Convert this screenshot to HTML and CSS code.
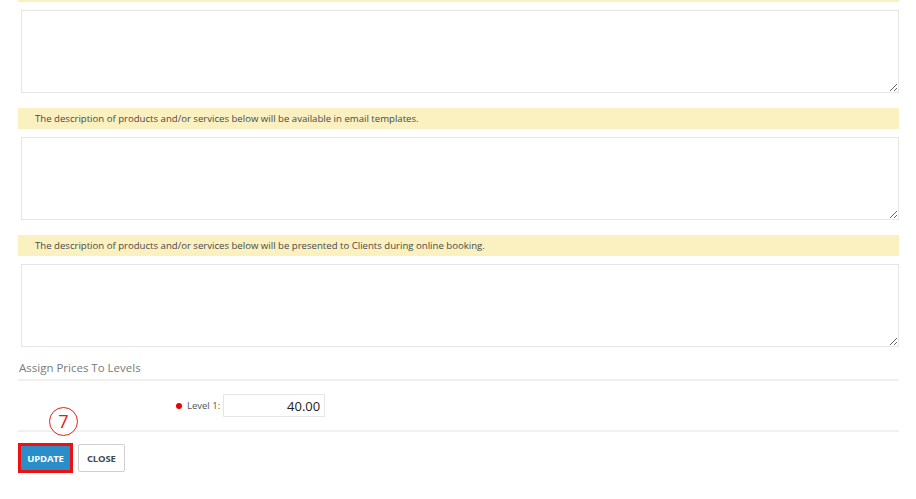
FILE: index.html
```html
<!DOCTYPE html>
<html lang="en">
<head>
    <meta charset="UTF-8">
    <meta name="viewport" content="width=device-width, initial-scale=1.0">
    <title>Edit Service</title>
    <link rel="stylesheet" href="styles.css">
</head>
<body>
    <div class="form">
        <div class="field">
            <div class="note cut"></div>
            <textarea class="desc"></textarea>
        </div>

        <div class="field">
            <div class="note">The description of products and/or services below will be available in email templates.</div>
            <textarea class="desc"></textarea>
        </div>

        <div class="field">
            <div class="note">The description of products and/or services below will be presented to Clients during online booking.</div>
            <textarea class="desc"></textarea>
        </div>

        <!-- Prices -->
        <div class="section-title">Assign Prices To Levels</div>
        <div class="levels">
            <span class="required"></span>
            <label for="level1">Level 1:</label>
            <input id="level1" class="price" type="text" value="40.00">
        </div>

        <div class="actions">
            <span class="step">7</span>
            <button class="btn btn-primary">UPDATE</button>
            <button class="btn">CLOSE</button>
        </div>
    </div>
</body>
</html>
```

FILE: styles.css
```css
* {
    margin: 0;
    padding: 0;
    box-sizing: border-box;
}

body {
    font-family: "Open Sans", Arial, sans-serif;
    background-color: #fff;
    color: #555;
}

.form {
    width: 881px;
    margin-left: 18px;
}

.field {
    display: flex;
    flex-direction: column;
    gap: 8px;
    margin-bottom: 15px;
}

.note {
    background-color: #fbf0c0;
    height: 21px;
    padding-left: 17px;
    font-size: 9.6px;
    line-height: 21px;
    color: #4a4a4a;
}

.note.cut {
    height: 2px;
}

.desc {
    display: block;
    margin-left: 3px;
    width: 878px;
    height: 83px;
    border: 1px solid #e6e6e6;
    outline: none;
    font-family: inherit;
}

.field:nth-child(3) {
    margin-bottom: 0;
}

.section-title {
    padding: 13px 0 0 1px;
    height: 34px;
    font-size: 11.5px;
    color: #7a7a7a;
    border-bottom: 2px solid #f0f0f0;
}

.levels {
    display: flex;
    align-items: center;
    height: 51px;
    padding-left: 158px;
    border-bottom: 2px solid #f0f0f0;
}

.required {
    width: 6px;
    height: 6px;
    border-radius: 50%;
    background-color: #e00;
    margin-right: 5px;
}

.levels label {
    font-size: 9.5px;
    color: #555;
    margin-right: 3px;
}

.price {
    width: 102px;
    height: 23px;
    border: 1px solid #e6e6e6;
    text-align: right;
    padding-right: 4px;
    font-family: inherit;
    font-size: 13px;
    color: #222;
    outline: none;
}

.actions {
    position: relative;
    display: flex;
    align-items: flex-start;
    gap: 5px;
    padding-top: 11px;
}

/* annotation marker */
.step {
    position: absolute;
    left: 31px;
    top: -25px;
    width: 29px;
    height: 29px;
    border: 1.5px solid #e0201a;
    border-radius: 50%;
    background: #fff;
    color: #e0201a;
    font-size: 18px;
    line-height: 26px;
    text-align: center;
}

.btn {
    height: 28px;
    margin-top: 1px;
    padding: 0 8px;
    background-color: #fff;
    border: 1px solid #cfcfcf;
    border-radius: 2px;
    font-family: inherit;
    font-size: 9.5px;
    font-weight: 700;
    color: #3d4a5a;
    letter-spacing: -0.2px;
}

.btn-primary {
    height: 30px;
    width: 55px;
    margin-top: 0;
    padding: 0;
    background-color: #2a8fc8;
    border: 3px solid #ee1111;
    border-radius: 0;
    color: #fff;
}
```
